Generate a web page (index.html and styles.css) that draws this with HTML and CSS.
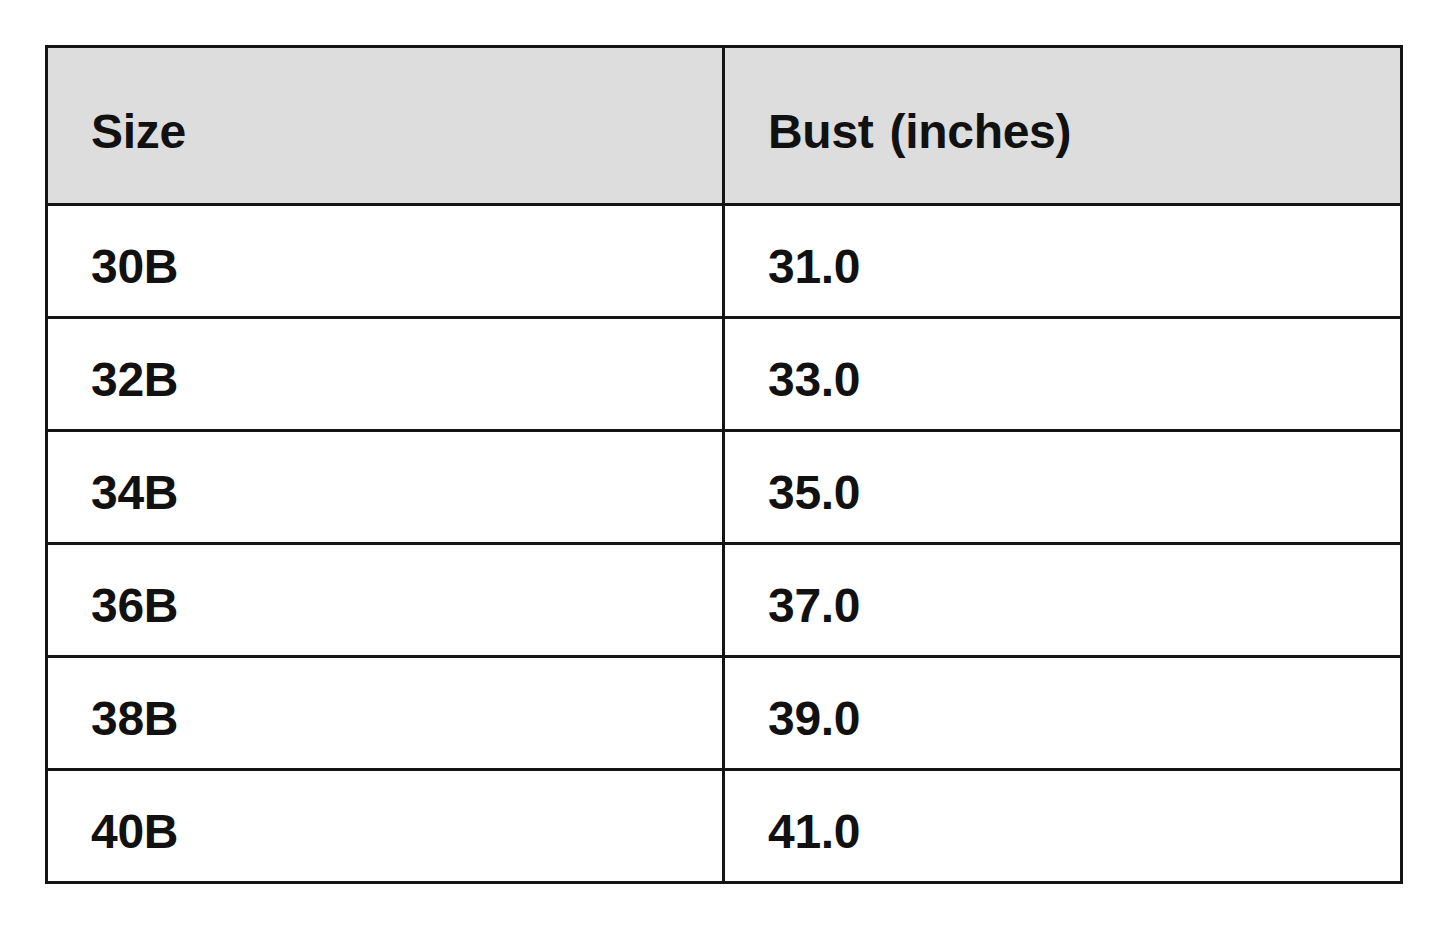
FILE: index.html
```html
<!DOCTYPE html>
<html>
<head>
<meta charset="utf-8">
<link rel="stylesheet" href="styles.css">
</head>
<body>
<div class="table">
  <div class="cell head">Size</div>
  <div class="cell head">Bust (inches)</div>
  <div class="cell">30B</div><div class="cell">31.0</div>
  <div class="cell">32B</div><div class="cell">33.0</div>
  <div class="cell">34B</div><div class="cell">35.0</div>
  <div class="cell">36B</div><div class="cell">37.0</div>
  <div class="cell">38B</div><div class="cell">39.0</div>
  <div class="cell">40B</div><div class="cell">41.0</div>
</div>
</body>
</html>
```
FILE: styles.css
```css
html, body {
  margin: 0;
  padding: 0;
  background: #ffffff;
}
body {
  padding: 45px 0 0 45px;
}
.table {
  display: grid;
  width: 1352px;
  grid-template-columns: 674px 675px;
  grid-template-rows: 155px repeat(6, 110px);
  gap: 3px;
  padding: 3px;
  background: #141414;
}
.cell {
  background: #ffffff;
  display: flex;
  align-items: center;
  padding: 11px 0 0 43px;
  box-sizing: border-box;
  font-family: "Liberation Sans", Arial, sans-serif;
  font-weight: bold;
  font-size: 48px;
  letter-spacing: -0.3px;
  word-spacing: 3px;
  color: #111111;
}
.head {
  background: #dddddd;
}
```
